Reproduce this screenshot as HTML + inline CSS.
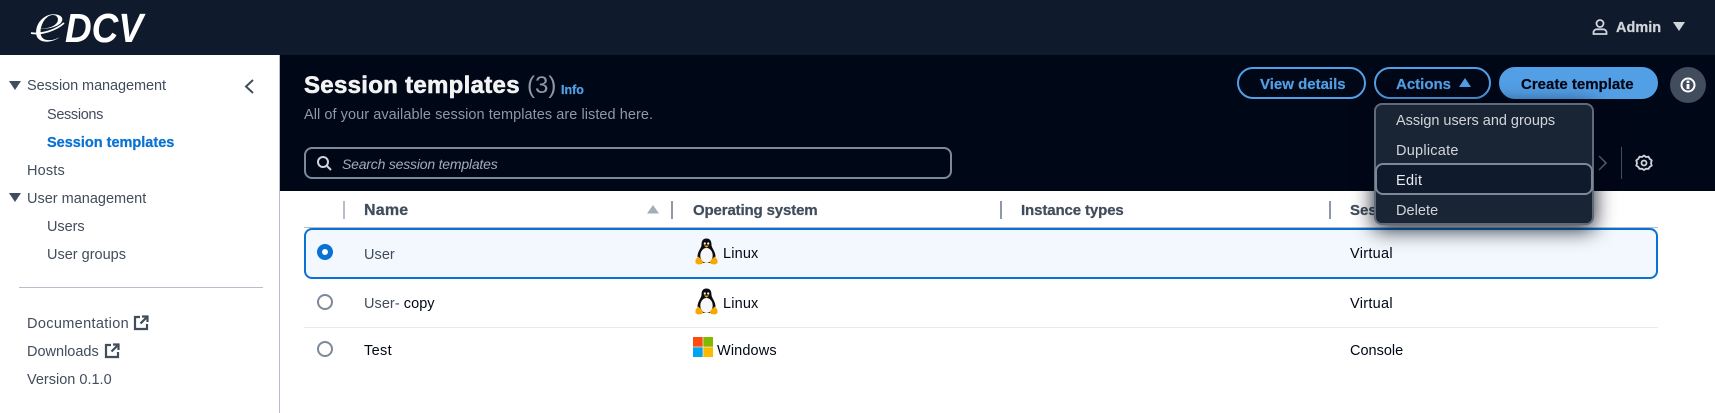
<!DOCTYPE html>
<html lang="en"><head><meta charset="utf-8"><title>Session templates</title>
<style>
*{box-sizing:border-box}
html,body{margin:0;padding:0;width:1715px;height:413px;overflow:hidden;background:#fff;font-family:"Liberation Sans",sans-serif;font-size:14.5px;color:#414d5c}
.a{position:absolute;white-space:nowrap;line-height:20px;height:20px;margin-top:1px}
.abs{position:absolute}
.b{font-weight:bold;-webkit-text-stroke:.25px currentColor}
.dk{color:#000716}
.sep{position:absolute;width:2px;height:18px;top:201px;background:#8d99a8}
.btn{position:absolute;top:67px;height:32px;border:2px solid #539fe5;border-radius:16px;color:#539fe5;font-weight:bold;-webkit-text-stroke:.2px currentColor;line-height:31px;font-size:15px;white-space:nowrap}
svg{position:absolute;display:block;overflow:visible}
</style></head><body>

<div class="abs" style="left:0;top:0;width:1715px;height:55px;background:#0f1b2d"></div>
<svg style="left:28px;top:8px" width="120" height="40" viewBox="0 0 120 40">
<text transform="translate(5 34) scale(1.12 .95)" font-family="Liberation Serif" font-style="italic" font-size="64" fill="#fff" stroke="#0f1b2d" stroke-width="1.600">e</text>
<path d="M3 25 C14 27 28 22 36 15" fill="none" stroke="#fff" stroke-width="1.800"/>
<text x="37" y="34" font-family="Liberation Sans" font-style="italic" font-weight="bold" font-size="40.5" fill="#fff" textLength="78" lengthAdjust="spacingAndGlyphs">DCV</text>
</svg>
<svg style="left:1592px;top:18px" width="16" height="18" viewBox="0 0 16 18" fill="none" stroke="#d1d5db" stroke-width="1.8"><circle cx="8" cy="5.500" r="3.500"/><path d="M1.500 16v-1.500c0-2 1.500-3.200 3.500-3.200h6c2 0 3.500 1.200 3.500 3.200V16z"/></svg>
<div class="a b" style="left:1616px;top:17px;color:#d1d5db;font-size:14.500px">Admin</div>
<svg style="left:1673px;top:22px" width="12" height="10"><path d="M0 0h12L6 9z" fill="#d1d5db"/></svg>

<div class="abs" style="left:0;top:55px;width:280px;height:358px;background:#fff;border-right:1px solid #b6bec9"></div>
<svg style="left:9px;top:81px" width="12" height="10"><path d="M0 0h12L6 9z" fill="#414d5c"/></svg>
<div class="a" style="left:27px;top:75px;letter-spacing:-.07px">Session management</div>
<svg style="left:243px;top:78px" width="12" height="17" fill="none" stroke="#414d5c" stroke-width="2"><path d="M10 2L3 8.500l7 6.500"/></svg>
<div class="a" style="left:47px;top:104px;letter-spacing:-.35px">Sessions</div>
<div class="a b" style="left:47px;top:132px;color:#0972d3;letter-spacing:0">Session templates</div>
<div class="a" style="left:27px;top:160px;letter-spacing:.16px">Hosts</div>
<svg style="left:9px;top:193px" width="12" height="10"><path d="M0 0h12L6 9z" fill="#414d5c"/></svg>
<div class="a" style="left:27px;top:188px">User management</div>
<div class="a" style="left:47px;top:216px;letter-spacing:-.06px">Users</div>
<div class="a" style="left:47px;top:244px">User groups</div>
<div class="abs" style="left:19px;top:287px;width:244px;height:1px;background:#b6bec9"></div>
<div class="a" style="left:27px;top:313px;letter-spacing:.35px">Documentation</div>
<svg style="left:134px;top:315px" width="15" height="15" fill="none" stroke="#414d5c" stroke-width="2.200"><path d="M6 2H1v12h12V9M8 1.500h5.500V7M13 2L6.500 8.500"/></svg>
<div class="a" style="left:27px;top:341px">Downloads</div>
<svg style="left:105px;top:343px" width="15" height="15" fill="none" stroke="#414d5c" stroke-width="2.200"><path d="M6 2H1v12h12V9M8 1.500h5.500V7M13 2L6.500 8.500"/></svg>
<div class="a" style="left:27px;top:369px">Version 0.1.0</div>

<div class="abs" style="left:280px;top:55px;width:1435px;height:136px;background:#000716"></div>
<div class="a b" style="left:304px;top:73px;font-size:24px;line-height:24px;height:24px;color:#f2f3f3;-webkit-text-stroke:.6px #f2f3f3;letter-spacing:.3px">Session templates</div>
<div class="a" style="left:527px;top:73px;font-size:24px;line-height:24px;height:24px;color:#8d99a8">(3)</div>
<div class="a b" style="left:561px;top:79px;font-size:12.500px;color:#539fe5">Info</div>
<div class="a" style="left:304px;top:104px;color:#8d99a8;font-size:14.500px;letter-spacing:.06px">All of your available session templates are listed here.</div>
<div class="abs" style="left:304px;top:147px;width:648px;height:32px;border:2px solid #7d8998;border-radius:8px;background:#000716"></div>
<svg style="left:316px;top:155px" width="17" height="17" fill="none" stroke="#d1d5db" stroke-width="2"><circle cx="7" cy="7" r="5"/><path d="M10.500 10.500L15 15"/></svg>
<div class="a" style="left:342px;top:153px;font-style:italic;color:#a4adb8;font-size:14px;letter-spacing:-.2px">Search session templates</div>

<div class="btn" style="left:1237px;width:129px;padding-left:21px">View details</div>
<div class="btn" style="left:1374px;width:117px;padding-left:20px">Actions</div>
<svg style="left:1459px;top:78px" width="12" height="10"><path d="M0 9h12L6 0z" fill="#539fe5"/></svg>
<div class="btn" style="left:1499px;width:159px;padding-left:20px;background:#539fe5;color:#000716">Create template</div>
<div class="abs" style="left:1670px;top:67px;width:36px;height:36px;border-radius:50%;background:#414d5c"></div>
<svg style="left:1680px;top:77px" width="16" height="16"><circle cx="8" cy="8" r="6.500" fill="none" stroke="#fff" stroke-width="2"/><rect x="6.600" y="7" width="2.800" height="5" fill="#fff"/><rect x="6.600" y="3.600" width="2.800" height="2.400" fill="#fff"/></svg>
<svg style="left:1597px;top:154px" width="12" height="18" fill="none" stroke="#5f6b7a" stroke-width="1.500"><path d="M2 2l7 7-7 7"/></svg>
<div class="abs" style="left:1621px;top:147px;width:1px;height:32px;background:#414d5c"></div>
<svg style="left:1635px;top:154px" width="18" height="18" viewBox="0 0 18 18" fill="none" stroke="#d1d5db" stroke-width="1.800"><path d="M9 1.500l2 1.500 2.500-.3 1.200 2.200 2 1.500-.7 2.600.7 2.600-2 1.300-1.200 2-2.500-.2-2 1.300-2-1.300-2.500.2-1.200-2-2-1.300.7-2.600L1.300 6.400l2-1.500 1.200-2.200L7 3z" stroke-linejoin="round"/><circle cx="9" cy="9" r="2.500"/></svg>

<div class="sep" style="left:343px;background:#b6bec9"></div>
<div class="a b" style="left:364px;top:200px;font-size:16px;letter-spacing:.2px">Name</div>
<svg style="left:647px;top:205px" width="12" height="9"><path d="M0 8.500h12L6 0z" fill="#a4adb8"/></svg>
<div class="sep" style="left:671px"></div>
<div class="a b" style="left:693px;top:200px;font-size:15px;letter-spacing:-.14px">Operating system</div>
<div class="sep" style="left:1000px"></div>
<div class="a b" style="left:1021px;top:200px;font-size:15px;letter-spacing:-.11px">Instance types</div>
<div class="sep" style="left:1329px"></div>
<div class="a b" style="left:1350px;top:200px;font-size:15px">Session type</div>

<div class="abs" style="left:304px;top:227px;width:1354px;height:1px;background:#b6bec9"></div>
<div class="abs" style="left:304px;top:228px;width:1354px;height:51px;background:#f2f8fd;border:2px solid #0972d3;border-radius:8px"></div>
<div class="abs" style="left:317px;top:244px;width:16px;height:16px;border-radius:50%;border:5px solid #0972d3;background:#fff"></div>
<div class="a" style="left:364px;top:244px;letter-spacing:.05px">User</div>
<div class="a dk" style="left:723px;top:243px;letter-spacing:.16px">Linux</div>
<div class="a dk" style="left:1350px;top:243px;letter-spacing:.29px">Virtual</div>

<div class="abs" style="left:317px;top:294px;width:16px;height:16px;border-radius:50%;border:2px solid #7d8998;background:#fff"></div>
<div class="a" style="left:364px;top:293px;letter-spacing:.05px">User- <span class="dk">copy</span></div>
<div class="a dk" style="left:723px;top:293px;letter-spacing:.16px">Linux</div>
<div class="a dk" style="left:1350px;top:293px;letter-spacing:.29px">Virtual</div>
<div class="abs" style="left:304px;top:327px;width:1354px;height:1px;background:#e9ebed"></div>

<div class="abs" style="left:317px;top:341px;width:16px;height:16px;border-radius:50%;border:2px solid #7d8998;background:#fff"></div>
<div class="a dk" style="left:364px;top:340px;letter-spacing:.35px">Test</div>
<div class="a dk" style="left:717px;top:340px;letter-spacing:.13px">Windows</div>
<div class="a dk" style="left:1350px;top:340px">Console</div>

<svg style="left:695px;top:238px" width="23" height="27" viewBox="0 0 23 27"><path d="M11.500 .5C7.500 .5 6.500 3.500 6.500 7C6.500 10 2.500 13 2.500 19C2.500 22 4 25 7 25H16C19 25 20.500 22 20.500 19C20.500 13 16.500 10 16.500 7C16.500 3.500 15.500 .5 11.500 .5Z" fill="#0b0b0f"/><ellipse cx="11.500" cy="17.500" rx="6.200" ry="7.500" fill="#f7f7f7"/><circle cx="9.800" cy="5.500" r="1.100" fill="#fff"/><circle cx="13.200" cy="5.500" r="1.100" fill="#fff"/><path d="M8.800 7.500h5.400l-2.700 2.300z" fill="#f5a800"/><path d="M.5 22L3 18.500L5 20L8.500 24L7 26L3 26.500L.5 25ZM22.500 22L20 18.500L18 20L14.500 24L16 26L20 26.500L22.500 25Z" fill="#f5a800"/></svg>
<svg style="left:695px;top:288px" width="23" height="27" viewBox="0 0 23 27"><path d="M11.500 .5C7.500 .5 6.500 3.500 6.500 7C6.500 10 2.500 13 2.500 19C2.500 22 4 25 7 25H16C19 25 20.500 22 20.500 19C20.500 13 16.500 10 16.500 7C16.500 3.500 15.500 .5 11.500 .5Z" fill="#0b0b0f"/><ellipse cx="11.500" cy="17.500" rx="6.200" ry="7.500" fill="#f7f7f7"/><circle cx="9.800" cy="5.500" r="1.100" fill="#fff"/><circle cx="13.200" cy="5.500" r="1.100" fill="#fff"/><path d="M8.800 7.500h5.400l-2.700 2.300z" fill="#f5a800"/><path d="M.5 22L3 18.500L5 20L8.500 24L7 26L3 26.500L.5 25ZM22.500 22L20 18.500L18 20L14.500 24L16 26L20 26.500L22.500 25Z" fill="#f5a800"/></svg>
<svg style="left:693px;top:337px" width="20" height="20"><rect width="9.700" height="9.700" fill="#ff4b0e"/><rect x="10.300" width="9.700" height="9.700" fill="#7fba00"/><rect y="10.300" width="9.700" height="9.700" fill="#00a4ef"/><rect x="10.300" y="10.300" width="9.700" height="9.700" fill="#ffb900"/></svg>

<div class="abs" style="left:1374px;top:103px;width:220px;height:122px;background:#192534;border:2px solid #5f6b7a;border-radius:8px;box-shadow:0 4px 20px 1px rgba(0,7,22,.85)"></div>
<div class="abs" style="left:1375px;top:163px;width:218px;height:32px;background:#0f1b2d;border:2px solid #7d8998;border-radius:8px"></div>
<div class="a" style="left:1396px;top:110px;color:#d1d5db;letter-spacing:-.02px">Assign users and groups</div>
<div class="a" style="left:1396px;top:140px;color:#d1d5db;letter-spacing:.25px">Duplicate</div>
<div class="a" style="left:1396px;top:170px;color:#e9ebed;letter-spacing:.33px">Edit</div>
<div class="a" style="left:1396px;top:200px;color:#d1d5db;letter-spacing:.05px">Delete</div>
</body></html>
